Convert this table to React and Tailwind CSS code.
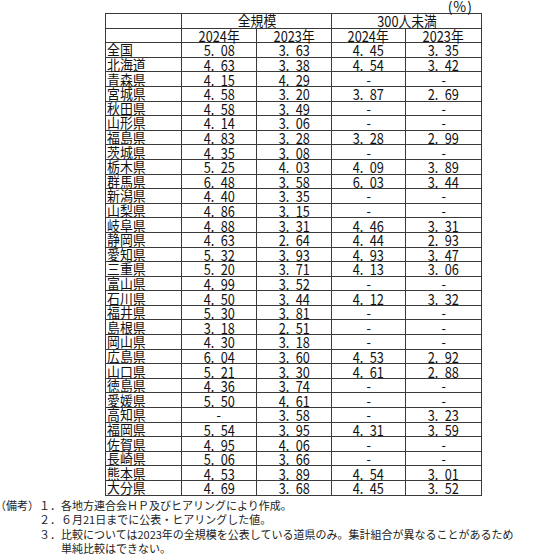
import React from "react";

const D = "-";
const rows = [
  ["全国", "5.08", "3.63", "4.45", "3.35"],
  ["北海道", "4.63", "3.38", "4.54", "3.42"],
  ["青森県", "4.15", "4.29", D, D],
  ["宮城県", "4.58", "3.20", "3.87", "2.69"],
  ["秋田県", "4.58", "3.49", D, D],
  ["山形県", "4.14", "3.06", D, D],
  ["福島県", "4.83", "3.28", "3.28", "2.99"],
  ["茨城県", "4.35", "3.08", D, D],
  ["栃木県", "5.25", "4.03", "4.09", "3.89"],
  ["群馬県", "6.48", "3.58", "6.03", "3.44"],
  ["新潟県", "4.40", "3.35", D, D],
  ["山梨県", "4.86", "3.15", D, D],
  ["岐阜県", "4.88", "3.31", "4.46", "3.31"],
  ["静岡県", "4.63", "2.64", "4.44", "2.93"],
  ["愛知県", "5.32", "3.93", "4.93", "3.47"],
  ["三重県", "5.20", "3.71", "4.13", "3.06"],
  ["富山県", "4.99", "3.52", D, D],
  ["石川県", "4.50", "3.44", "4.12", "3.32"],
  ["福井県", "5.30", "3.81", D, D],
  ["島根県", "3.18", "2.51", D, D],
  ["岡山県", "4.30", "3.18", D, D],
  ["広島県", "6.04", "3.60", "4.53", "2.92"],
  ["山口県", "5.21", "3.30", "4.61", "2.88"],
  ["徳島県", "4.36", "3.74", D, D],
  ["愛媛県", "5.50", "4.61", D, D],
  ["高知県", D, "3.58", D, "3.23"],
  ["福岡県", "5.54", "3.95", "4.31", "3.59"],
  ["佐賀県", "4.95", "4.06", D, D],
  ["長崎県", "5.06", "3.66", D, D],
  ["熊本県", "4.53", "3.89", "4.54", "3.01"],
  ["大分県", "4.69", "3.68", "4.45", "3.52"],
];

const notes = [
  ["１．", "各地方連合会ＨＰ及びヒアリングにより作成。"],
  ["２．", "６月21日までに公表・ヒアリングした値。"],
  ["３．", "比較については2023年の全規模を公表している道県のみ。集計組合が異なることがあるため", "単純比較はできない。"],
];

// "5.08" -> "5. 08" with an en space after the point, as printed
const fmt = (v) => v.replace(".", ".\u2002");

function Cell({ children, left, span, kanji }) {
  return (
    <div
      className={
        "border-r border-b border-[#3a3a3a] flex items-center " +
        (left ? "justify-start pl-[1px]" : "justify-center") +
        (span ? " col-span-2" : "")
      }
    >
      <span
        className={
          "inline-block whitespace-nowrap " +
          (kanji ? "text-[14px] scale-x-[0.92] " : "text-[15px] scale-x-[0.85] ") +
          (left ? "origin-left" : "origin-center")
        }
      >
        {children}
      </span>
    </div>
  );
}

export default function App() {
  return (
    <div className="w-[540px] h-[555px] bg-white text-[#111] font-['Noto_Sans_CJK_JP',sans-serif] overflow-hidden">
      <div className="h-[13px] flex justify-end pr-[67px] text-[14px] leading-[12px]">
        <span className="inline-block tracking-[1px]">(%)</span>
      </div>
      <div className="ml-[105px] w-[377px] grid grid-cols-[76px_75px_75px_74px_76px] auto-rows-[14.6px] border-t border-l border-[#3a3a3a] leading-[13px]">
        <Cell left>{""}</Cell>
        <Cell span kanji>全規模</Cell>
        <Cell span>300人未満</Cell>
        <Cell left>{""}</Cell>
        <Cell>2024年</Cell>
        <Cell>2023年</Cell>
        <Cell>2024年</Cell>
        <Cell>2023年</Cell>
        {rows.map((r) => (
          <React.Fragment key={r[0]}>
            <Cell left kanji>{r[0]}</Cell>
            <Cell>{fmt(r[1])}</Cell>
            <Cell>{fmt(r[2])}</Cell>
            <Cell>{fmt(r[3])}</Cell>
            <Cell>{fmt(r[4])}</Cell>
          </React.Fragment>
        ))}
      </div>
      <div className="flex text-[11px] leading-[14.5px] text-[#222] mt-[2px]">
        <div className="w-[39px] flex justify-end whitespace-nowrap shrink-0">（備考）</div>
        <div className="flex flex-col">
          {notes.map((n) => (
            <div key={n[0]} className="flex">
              <div className="w-[22px] shrink-0 whitespace-nowrap">{n[0]}</div>
              <div className="whitespace-nowrap">
                {n[1]}
                {n[2] && <div>{n[2]}</div>}
              </div>
            </div>
          ))}
        </div>
      </div>
    </div>
  );
}
